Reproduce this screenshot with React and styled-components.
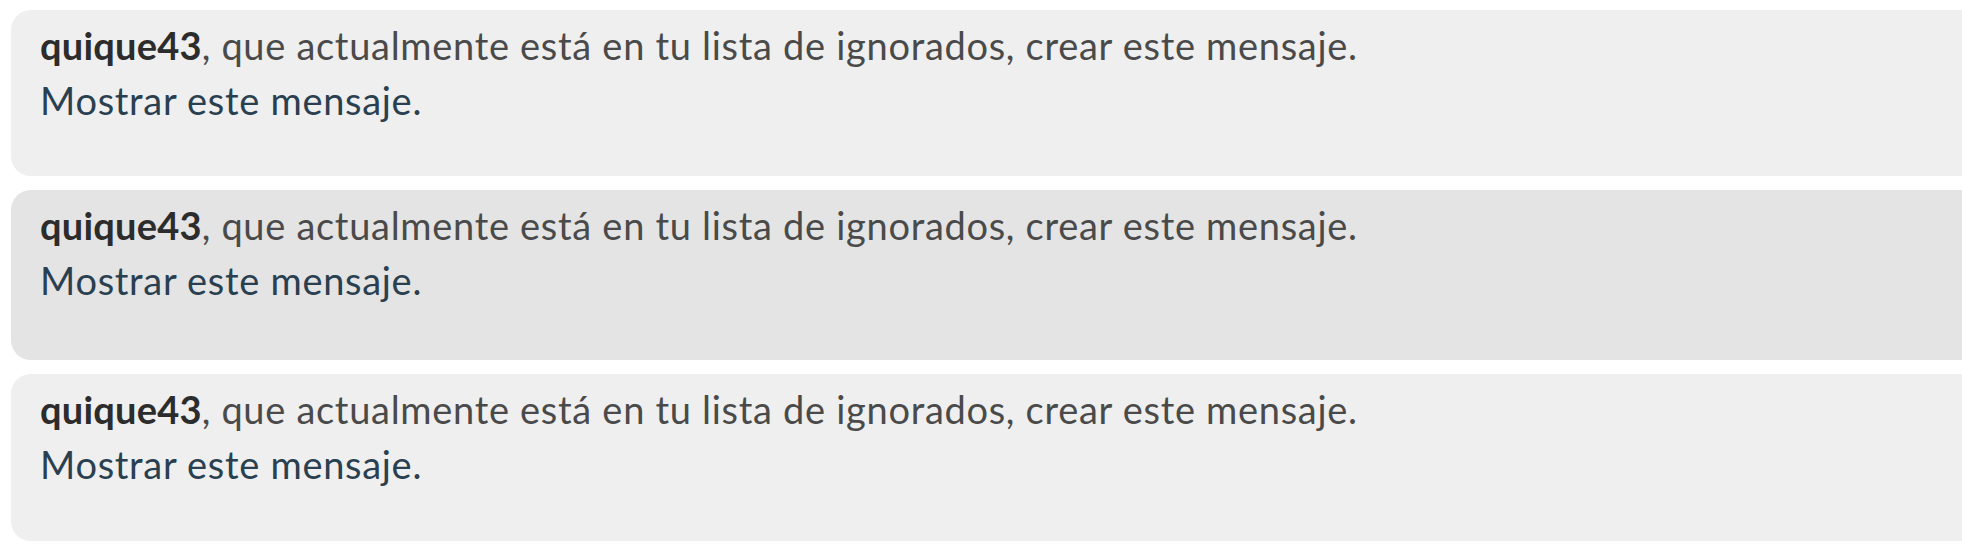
import React from "react";
import styled, { createGlobalStyle } from "styled-components";

const GlobalStyle = createGlobalStyle`
  html, body {
    margin: 0;
    padding: 0;
    background: #ffffff;
    overflow: hidden;
  }
  body {
    font-family: Lato, "Open Sans", "Liberation Sans", sans-serif;
  }
`;

const List = styled.div`
  display: flex;
  flex-direction: column;
  gap: 14px;
  padding-top: 10px;
  margin-left: 11px;
  margin-right: -40px;
`;

const IgnoredPost = styled.div`
  height: ${(props) => props.h}px;
  box-sizing: border-box;
  padding: 8px 29px 0;
  border-radius: 20px;
  background: ${(props) => (props.alt ? "#e4e4e4" : "#efefef")};
  font-size: 38px;
  line-height: 55px;
  letter-spacing: 0.7px;
  color: #4a4a4a;
`;

const Author = styled.strong`
  font-weight: 700;
  letter-spacing: 0.2px;
  color: #2c2c2c;
`;

const ShowLink = styled.a`
  display: block;
  color: #2a3f4f;
  text-decoration: none;
  cursor: pointer;
`;

const posts = [
  { id: 1, h: 166, alt: false },
  { id: 2, h: 170, alt: true },
  { id: 3, h: 167, alt: false },
];

export default function App() {
  return (
    <>
      <GlobalStyle />
      <List>
        {posts.map((p) => (
          <IgnoredPost key={p.id} h={p.h} alt={p.alt}>
            <div>
              <Author>quique43</Author>, que actualmente está en tu lista de
              ignorados, crear este mensaje.
            </div>
            <ShowLink>Mostrar este mensaje.</ShowLink>
          </IgnoredPost>
        ))}
      </List>
    </>
  );
}
